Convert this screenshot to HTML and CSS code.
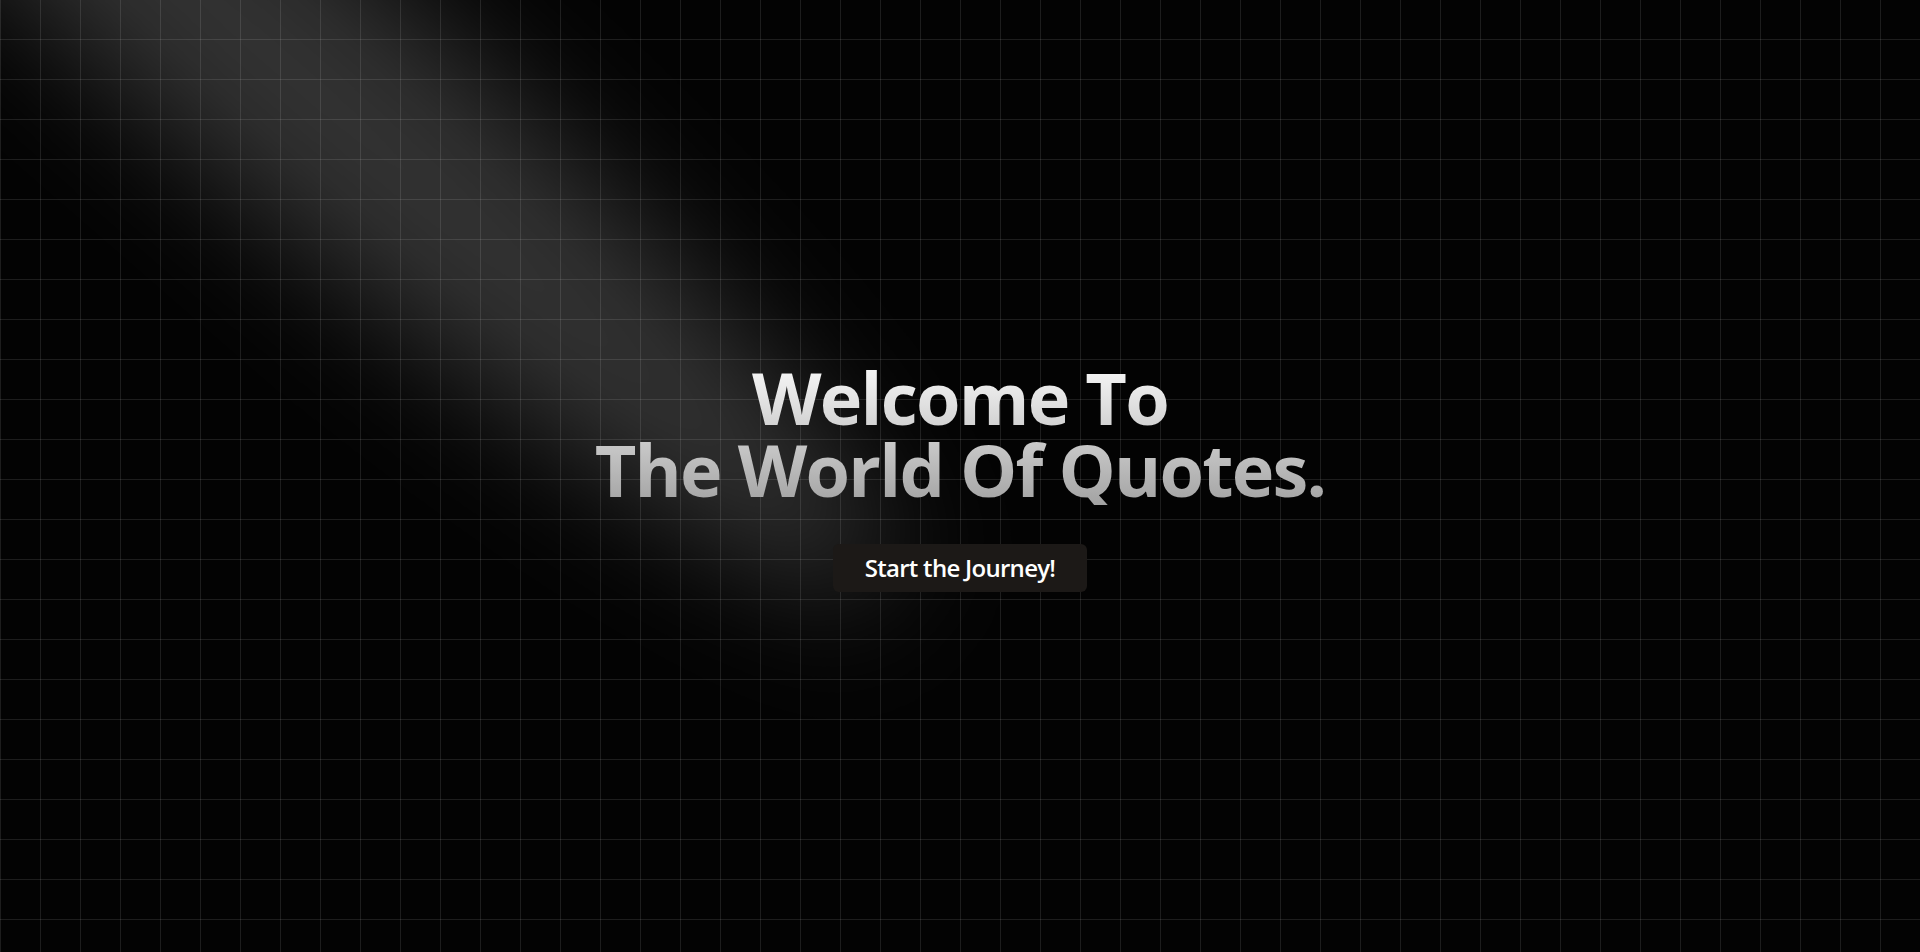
FILE: index.html
```html
<!DOCTYPE html>
<html lang="en">
<head>
<meta charset="utf-8">
<title>The World Of Quotes</title>
<link rel="stylesheet" href="styles.css">
</head>
<body>
<main class="hero">
  <svg class="spotlight" viewBox="0 0 1920 952" preserveAspectRatio="none" aria-hidden="true">
    <defs>
      <filter id="blur" x="-50%" y="-50%" width="200%" height="200%">
        <feGaussianBlur stdDeviation="62"/>
      </filter>
    </defs>
    <ellipse cx="290" cy="70" rx="790" ry="125" fill="#fff" fill-opacity="0.19" filter="url(#blur)" transform="rotate(41 290 70)"/>
  </svg>
  <div class="content">
    <h1 class="title">Welcome To<br>The World Of Quotes.</h1>
    <button class="cta" type="button">Start the Journey!</button>
  </div>
</main>
</body>
</html>
```
FILE: styles.css
```css
html, body {
  margin: 0;
  padding: 0;
  height: 100%;
}
body {
  background: #030303;
  font-family: "Open Sans", "Noto Sans", sans-serif;
  overflow: hidden;
}
.hero {
  position: relative;
  height: 100vh;
  width: 100%;
  display: flex;
  align-items: center;
  justify-content: center;
  background-color: #030303;
  background-image:
    linear-gradient(to right, rgba(255,255,255,0.1) 1px, transparent 1px),
    linear-gradient(to bottom, transparent 39px, rgba(255,255,255,0.1) 39px);
  background-size: 40px 40px;
  overflow: hidden;
}
.spotlight {
  position: absolute;
  inset: 0;
  width: 100%;
  height: 100%;
  pointer-events: none;
}
.content {
  position: relative;
  display: flex;
  flex-direction: column;
  align-items: center;
}
.title {
  margin: 0;
  font-size: 72px;
  line-height: 72px;
  font-weight: 700;
  text-align: center;
  letter-spacing: -0.025em;
  background: linear-gradient(to bottom, #fafafa, #a3a3a3);
  -webkit-background-clip: text;
  background-clip: text;
  color: transparent;
}
.cta {
  margin-top: 39px;
  padding: 8px 32px;
  border: 0;
  border-radius: 6px;
  background: #1c1917;
  color: #fff;
  font-family: inherit;
  font-size: 24px;
  line-height: 32px;
  font-weight: 600;
  letter-spacing: -0.03em;
  cursor: pointer;
}
```
